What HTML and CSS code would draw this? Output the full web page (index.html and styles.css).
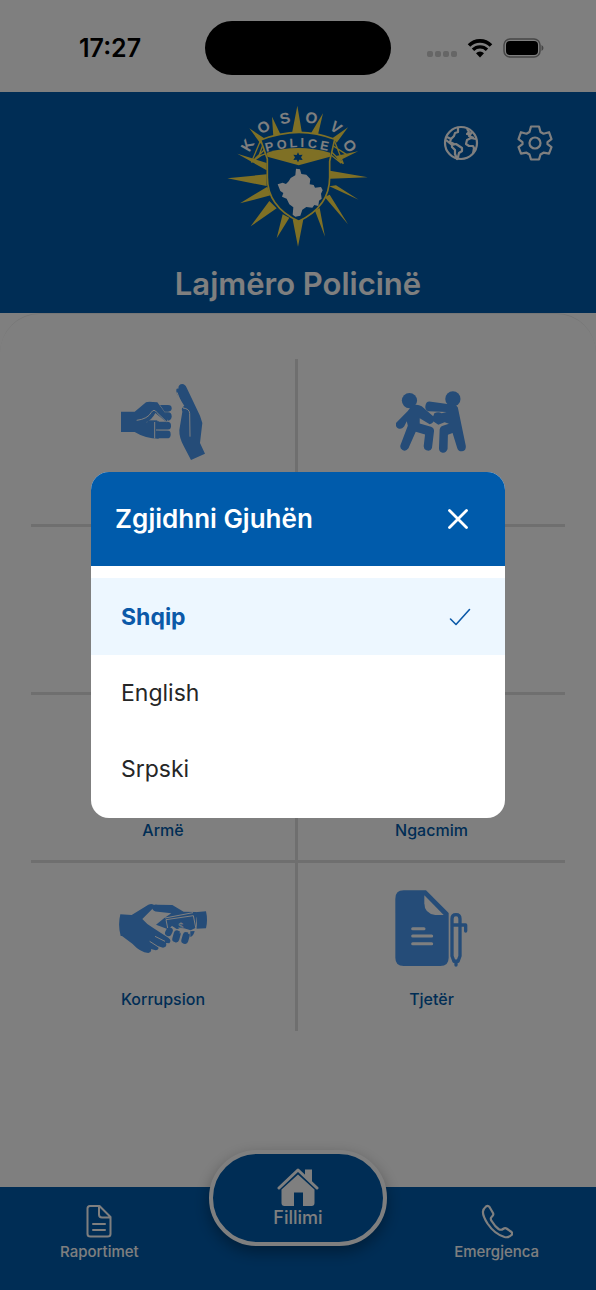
FILE: index.html
```html
<!DOCTYPE html>
<html lang="sq">
<head>
<meta charset="utf-8">
<meta name="viewport" content="width=device-width, initial-scale=1">
<title>Lajmëro Policinë</title>
<link rel="stylesheet" href="styles.css">
</head>
<body>
<div class="app">
  <div class="status">
    <span class="status-time">17:27</span>
    <span class="island"></span>
    <span class="status-icons">
      <svg class="dots" width="30" height="6" viewBox="0 0 30 6" fill="#ccc"><rect width="6" height="6" rx="2"/><rect x="8" width="6" height="6" rx="2"/><rect x="16" width="6" height="6" rx="2"/><rect x="24" width="6" height="6" rx="2"/></svg>
      <svg width="26" height="20" viewBox="0 0 26 20" fill="none" stroke="#000"><path d="M2 7.500a15.500 15.500 0 0 1 22 0" stroke-width="3.600"/><path d="M6 11.800a9.900 9.900 0 0 1 14 0" stroke-width="3.400"/><path d="M13 19.500l-4-4.300a5.600 5.600 0 0 1 8 0z" fill="#000" stroke="none"/></svg>
      <svg width="41" height="20" viewBox="0 0 41 20"><rect x="1" y="1" width="36" height="18" rx="6" fill="none" stroke="#8c8c8c" stroke-width="1.500"/><rect x="3" y="3" width="32" height="14" rx="4" fill="#000"/><path d="M38.500 7v6q2-1 2-3t-2-3z" fill="#8c8c8c"/></svg>
    </span>
  </div>

  <header class="header">
    <svg class="logo" viewBox="0 0 468 468" role="img" aria-label="Kosovo Police">
      <path fill="#ffe04a" d="M232 29l14 83h-30zM156 62l26 54-22 6zM309 52l-16 68-20-8zM88 97l48 32-14 14zM384 94l-34 46-12-14zM52 173l88 28v22zM414 166l-60 30-6-16zM22 247l118-12v35zM443 244l-113-20v24zM60 322l82-50 10 26zM416 311l-88-40 20-3zM92 391l56-76 22 22zM384 385l-70-82 15-7zM170 427l18-72 20 10zM315 422l-30-78 14-8zM234 452l-16-82h32z"/>
      <path d="M122 133l-28 66 44-42M130 143l-14 38 22-8M342 131l28 72-36-36M340 150l40 26M94 199l32-22M334 178l30 24" fill="none" stroke="#ffe04a" stroke-width="4"/>
      <path d="M122 132q114-45 222-2l-15 66v48q0 88-93 132-94-44-94-132v-55z" fill="#005bab" stroke="#ffe04a" stroke-width="5"/>
      <path d="M140 170q94-28 190 0v12l-94 26-94-26z" fill="#ffe04a"/>
      <path d="M234 169l4 8 10-1-5 8 5 8-10-1-4 8-4-8-10 1 5-8-5-8 10 1z" fill="#005bab"/>
      <path d="M228 218l12 2 4 14 15 2 12 13-2 16 12 2 4 8 18-2 5 10-5 10 2 15-8 6-2 16-12-3-6 8-18-2-12 8-6 18-15 3-8-6 2-22-12-9-8-17-14-6 4-11-9-6-8-20 15-5 10 4 8-8 6-10 14-8z" fill="#fff"/>
      <g fill="#fff" class="logo-text">
        <g font-size="46">
          <text transform="translate(96 156) rotate(-60)">K</text><text transform="translate(140 106) rotate(-35)">O</text><text transform="translate(198 82) rotate(-12)">S</text><text transform="translate(271 81) rotate(12)">O</text><text transform="translate(339 107) rotate(35)">V</text><text transform="translate(376 157) rotate(60)">O</text>
        </g>
        <g font-size="38">
          <text transform="translate(151 165) rotate(-14)">P</text><text transform="translate(187 158) rotate(-9)">O</text><text transform="translate(221 154) rotate(-3)">L</text><text transform="translate(247 153)">I</text><text transform="translate(276 156) rotate(6)">C</text><text transform="translate(311 162) rotate(12)">E</text>
        </g>
      </g>
    </svg>
    <div class="actions">
      <button type="button" class="icon-btn" aria-label="Gjuha">
        <svg width="36" height="36" viewBox="0 0 36 36" fill="none" stroke="#fff" stroke-width="2.200" stroke-linejoin="round"><circle cx="18" cy="18" r="16"/><path d="M4 12l4 2 3-3 1-3 3-1 0-4M8 14l-1 3 4 2M3 15l6 5 4-1 6 4 0 3-3 2-1 4-1 2-2-5 0-4-3-3 0-3M24 4l2 3-2 2 4 1M29 7l-3 4 5 2M33 14l-5-1-4 2-1 4 3 2h4l1 2-1 6"/></svg>
      </button>
      <button type="button" class="icon-btn" aria-label="Cilësimet">
        <svg width="36" height="36" viewBox="0 0 36 36" fill="none" stroke="#fff" stroke-width="2.200" stroke-linejoin="round"><path d="M14 1.500h8l1.500 5.500 3 1.700 5.500-1.500 2.500 7-4 3v2l4 3-2.500 6.500-5.500-1-3 1.800-1.500 5h-8l-1.500-5-3-1.800-5.500 1-2.500-6.500 4-3v-2l-4-3 2.500-7 5.500 1.500 3-1.700z"/><circle cx="18" cy="18" r="5.500"/></svg>
      </button>
    </div>
    <h1 class="title">Lajmëro Policinë</h1>
  </header>

  <main class="sheet">
    <div class="grid">
      <a href="#" class="cell" aria-label="Dhunë"><span class="cell-icon">
        <svg width="85" height="77" viewBox="33 22 255 231"><g fill="#4b99f0"><path d="M33 108h41l34-28q5-3 34 0l28 38q8 14-2 20l-32-26q-10 20-28 28 28 0 38-4v53q-40 0-72-20H33z"/><path d="M150 88h24q11 0 11 10t-11 10h-10z"/><path d="M164 110h10q11 0 11 12t-11 13l-4-8z"/><path d="M112 134h30v50h-30z"/><rect x="134" y="138" width="49" height="25" rx="11"/><rect x="134" y="164" width="48" height="24" rx="11"/><path d="M205 39q0-14 12-14 8 0 13 11l40 84 7 22-7 60 15 32-42 19-22-42q-14-26-13-48l9-55q-5-13 6-17l-22-36q-6-18 4-16z"/></g><path d="M80 134q33-4 44-24 8-12 16 0l29 28M201 50l18 47q19 2 20 16l1 70M134 139v49M138 163h44" fill="none" stroke="#fff" stroke-width="3"/></svg>
      </span></a>
      <a href="#" class="cell" aria-label="Përleshje"><span class="cell-icon">
        <svg width="72" height="64" viewBox="33 31 216 193" fill="#4b99f0"><circle cx="73" cy="63" r="23"/><circle cx="204" cy="58" r="23"/><path d="M68 94q18-28 42-14l39 34q-2 18-15 20l-30-18v16l34 10q10 4 9 14l-6 50q-5 12-17 7-9-4-8-14l4-34-28-8-22 50q-8 11-18 5-9-5-6-15l22-58-3-14-8 16q-9 11-19 5-9-6-5-16z"/><path d="M133 66l60 8q18-3 26 10l24 116q1 14-11 16-12 1-15-10l-14-45-14 5-1 43q-4 12-15 11-10-2-11-12l2-58q2-10 12-12l16-5-13-5-19 8-20-14 8-21q12-6 22 0l15-4-55-2q-11-4-9-16 2-13 12-13z"/></svg>
      </span></a>
      <div class="cell"></div>
      <div class="cell"></div>
      <a href="#" class="cell">Armë</a>
      <a href="#" class="cell">Ngacmim</a>
      <a href="#" class="cell"><span class="cell-icon">
        <svg width="88" height="51" viewBox="28 45 264 153"><g fill="#4b99f0"><path d="M32 79l34 2 50-31q14-6 20 5l-38 38q14 17 34 28l44 28q11 8 3 17l-10-1q4 12-9 14l-14-4q3 11-8 12l-14-4q3 10-8 12-24-2-48-28l-31-23H33q-9-32-1-65z"/><path d="M144 50l44 1 34 20 37 1v47l-16 8-20-6-22 2-14-9-12 10-36-14 24-19 22-15-41-5q-14 0-17-12 3-12 17-9z"/><path d="M255 73l34-3q6 26 0 51l-29 1q5-25-5-49z"/><rect x="168" y="118" width="20" height="27" rx="10" transform="rotate(28 178 131)"/><rect x="190" y="127" width="21" height="36" rx="10" transform="rotate(16 200 145)"/><rect x="217" y="132" width="21" height="36" rx="10" transform="rotate(16 228 150)"/><path d="M242 130l13-1q-3 15-13 18z"/></g><path d="M174 120l-5-25 82-12 8 40M166 90l84-16M136 145l30 15M120 160l28 18" fill="none" stroke="#fff" stroke-width="3"/><path d="M185 118q12-2 10 10M207 126q8 0 4 10M235 128q6 2 2 10" fill="none" stroke="#fff" stroke-width="3"/><text x="213" y="123" font-size="27" class="money">$</text></svg>
      </span><span>Korrupsion</span></a>
      <a href="#" class="cell"><span class="cell-icon">
        <svg width="74" height="77" viewBox="32 27 222 231"><path d="M58 28h67l68 68v134q0 25-25 25H58q-25 0-25-25V53q0-25 25-25z" fill="#4b99f0"/><path d="M120 43l58 59h-25q-33-4-33-35z" fill="#fff"/><path d="M85 143h34M85 165h57M85 188h57" stroke="#fff" stroke-width="9" stroke-linecap="round"/><path d="M203 113q0-12 12-12t12 12v112l-6 16h-12l-6-16zM205 132h39v18M215 240v12" fill="none" stroke="#4b99f0" stroke-width="10" stroke-linejoin="round" stroke-linecap="round"/></svg>
      </span><span>Tjetër</span></a>
    </div>
  </main>

  <nav class="tabs">
    <a href="#" class="tab"><svg width="26" height="36" viewBox="0 0 26 36" fill="none" stroke="#fff" stroke-width="2" stroke-linejoin="round" stroke-linecap="round"><path d="M4 3h9.500l11 11v17q0 2.500-3 2.500h-17q-3 0-3-2.500v-25.500q0-2.500 2.500-2.500zM13 3v8.500q0 3 3 3h8M7 21h12M7 27h12"/></svg>Raportimet</a>
    <a href="#" class="tab tab-home"><svg width="42" height="40" viewBox="0 0 42 40"><path d="M2 21L21 3l19 18" fill="none" stroke="#fff" stroke-width="3" stroke-linecap="round" stroke-linejoin="round"/><path d="M28 2.500h7v14l-7-6.500z" fill="#fff"/><path d="M4.500 22.500L21 7.500l16.500 15V36q0 3-3 3H26V25.500h-9V39H7.500q-3 0-3-3z" fill="#fff"/></svg>Fillimi</a>
    <a href="#" class="tab"><svg width="32" height="36" viewBox="0 0 32 36" fill="none" stroke="#fff" stroke-width="2.200" stroke-linejoin="round"><path d="M5 3.500Q7 2 8.500 4l3.500 6q1 2-1 3.500-2.500 2 0 5 3 5 6.500 7.500 2.500 1.500 4.500 0 2-1.500 3.500-.5l5 3.500q1.500 1.500 0 3-3 3-7 2-10-3-17-13.500-5-8-4.500-12 0-2.500 3-5z"/></svg>Emergjenca</a>
  </nav>
</div>

<div class="overlay">
  <section class="modal" role="dialog" aria-modal="true" aria-labelledby="dialog-title">
    <div class="modal-head">
      <h2 class="modal-title" id="dialog-title">Zgjidhni Gjuhën</h2>
      <button type="button" class="close" aria-label="Mbyll"><svg width="20" height="20" viewBox="0 0 20 20" stroke="#fff" stroke-width="2.800" stroke-linecap="round"><path d="M1.500 1.500l17 17M18.500 1.500l-17 17"/></svg></button>
    </div>
    <div class="options">
      <button type="button" class="option option-selected">Shqip<svg width="22" height="18" viewBox="0 0 22 18" fill="none" stroke="#0b59a8" stroke-width="1.600" stroke-linecap="round" stroke-linejoin="round"><path d="M1.500 11l5.500 5.500L20.500 1.500"/></svg></button>
      <button type="button" class="option">English</button>
      <button type="button" class="option">Srpski</button>
    </div>
  </section>
</div>
</body>
</html>
```
FILE: styles.css
```css
* { box-sizing: border-box; }

body {
  margin: 0;
  font-family: Inter, "Liberation Sans", sans-serif;
  background: #fff;
  color: #000;
}

svg { display: block; flex: none; }
a { color: inherit; text-decoration: none; }
button { font: inherit; color: inherit; border: 0; padding: 0; background: none; cursor: pointer; }

.app { min-height: 100vh; display: flex; flex-direction: column; }

.status {
  display: grid;
  grid-template-columns: 126px 186px 1fr;
  align-items: center;
  height: 92px;
  padding: 4px 52px 0 79px;
}
.status-time { font-size: 25px; font-weight: 600; line-height: 32px; }
.island { height: 54px; border-radius: 27px; background: #000; }
.status-icons { display: flex; align-items: center; justify-content: flex-end; gap: 10px; }
.dots { margin-top: 12px; }

.header {
  display: grid;
  grid-template-columns: 1fr auto 1fr;
  background: #005bab;
  color: #fff;
  padding: 4px 43px 8px;
}
.logo { grid-column: 2; width: 156px; height: 156px; }
.logo-text { font-family: "Liberation Sans", Arial, sans-serif; font-weight: 700; text-anchor: middle; }
.actions { display: flex; gap: 38px; justify-content: flex-end; padding-top: 29px; height: 65px; }
.icon-btn { width: 36px; height: 36px; }
.title {
  grid-column: 1 / -1;
  margin: 12px 0 1px;
  font-size: 31px;
  line-height: 40px;
  font-weight: 600;
  text-align: center;
}

.sheet {
  flex: 1;
  padding: 45px 31px;
  border-top: 1px solid #ececec;
  border-radius: 40px 40px 0 0;
}
.grid { display: grid; grid-template-columns: 1fr 1fr; grid-auto-rows: 168px; }
.cell {
  display: flex;
  flex-direction: column;
  align-items: center;
  justify-content: flex-end;
  gap: 22px;
  border-bottom: 3px solid #dedede;
  padding-bottom: 20px;
  font-size: 16px;
  line-height: 20px;
  font-weight: 500;
  color: #005bab;
}
.cell:nth-child(odd) { border-right: 3px solid #dedede; }
.cell:nth-last-child(-n+2) { border-bottom: 0; padding-bottom: 22px; }
.cell:nth-child(-n+2) { padding-bottom: 64px; }
.cell-icon { display: flex; align-items: center; height: 77px; }
.money { fill: #fff; font-family: "Liberation Sans", sans-serif; text-anchor: middle; }

.tabs {
  display: grid;
  grid-template-columns: repeat(3, 1fr);
  height: 103px;
  background: #005bab;
  color: #fff;
}
.tab {
  display: flex;
  flex-direction: column;
  align-items: center;
  gap: 3px;
  padding-top: 16px;
  font-size: 15px;
  line-height: 20px;
  font-weight: 500;
}
.tab-home {
  justify-self: center;
  width: 178px;
  height: 96px;
  margin-top: -37px;
  padding-top: 13px;
  gap: 1px;
  border: 4px solid #fff;
  border-radius: 48px;
  background: #005bab;
  box-shadow: 0 6px 16px rgba(0, 0, 0, .35);
  font-size: 18px;
  font-weight: 500;
}

.overlay {
  position: fixed;
  inset: 0;
  display: flex;
  align-items: center;
  justify-content: center;
  padding: 0 91px;
  background: rgba(0, 0, 0, .5);
}
.modal {
  flex: 1;
  overflow: hidden;
  border-radius: 18px;
  background: #fff;
}
.modal-head {
  display: flex;
  align-items: center;
  justify-content: space-between;
  padding: 29px 37px 29px 24px;
  background: #005bab;
  color: #fff;
}
.modal-title { margin: 0; font-size: 26px; line-height: 36px; font-weight: 600; }
.options { padding: 12px 0 11px; }
.option {
  display: flex;
  align-items: center;
  justify-content: space-between;
  width: 100%;
  height: 76px;
  padding: 0 34px 0 30px;
  font-size: 23px;
  line-height: 32px;
  color: #262626;
}
.option-selected { height: 77px; background: #edf7ff; color: #0b59a8; font-weight: 700; }
```
